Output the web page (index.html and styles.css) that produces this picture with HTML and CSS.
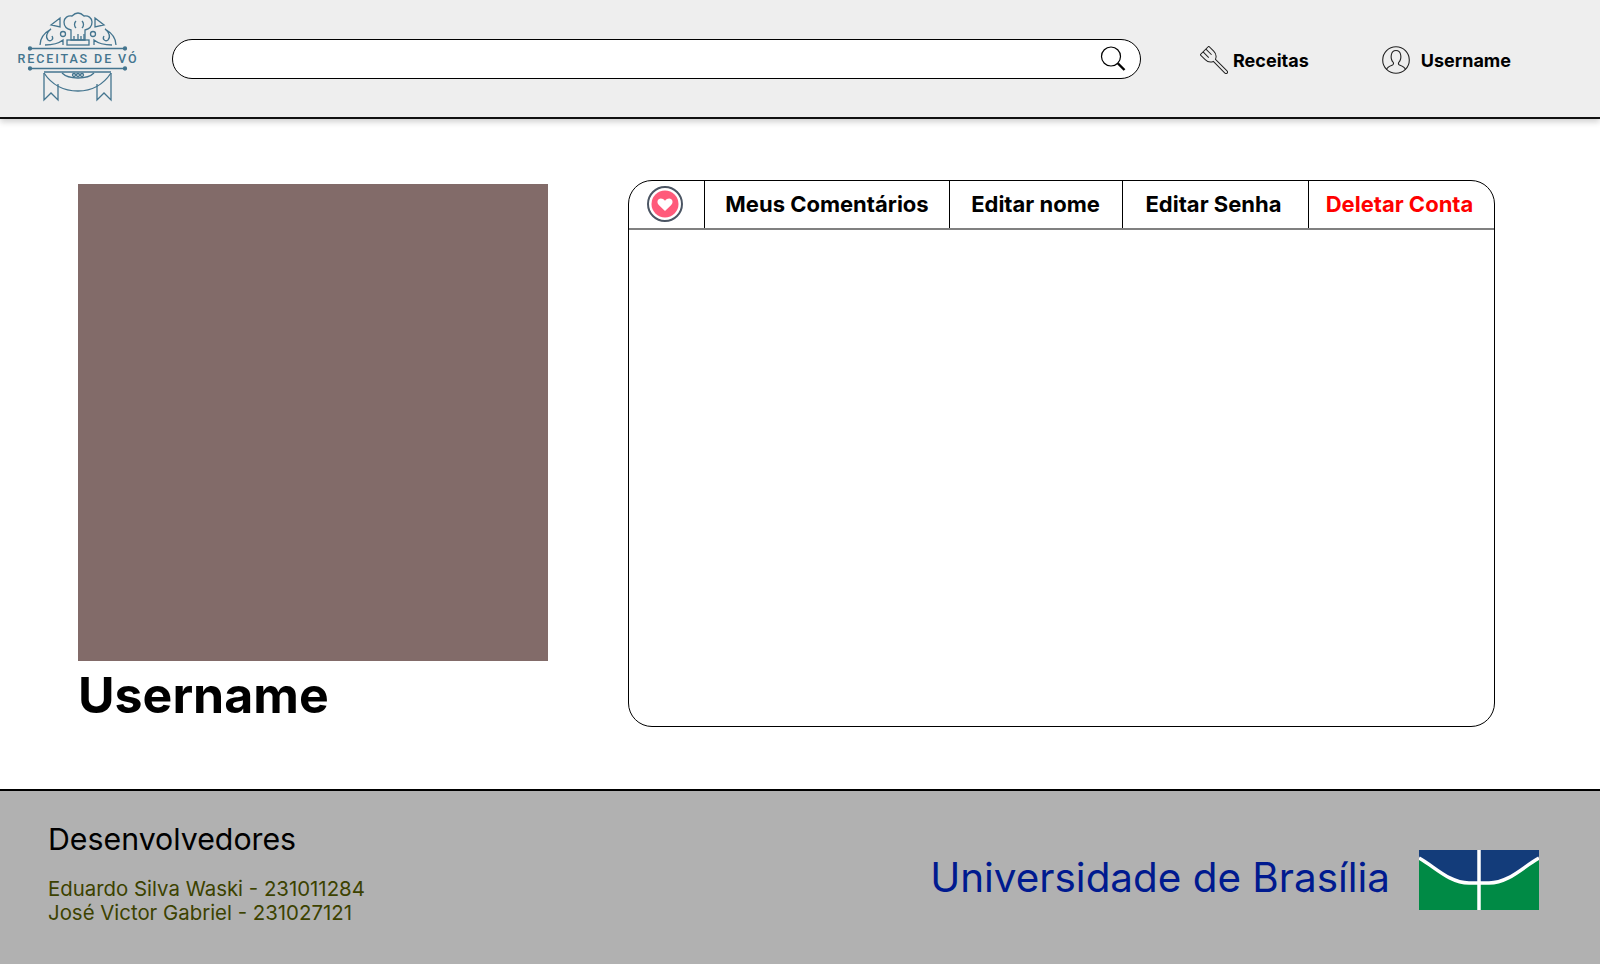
FILE: index.html
```html
<!DOCTYPE html>
<html lang="pt-BR">
<head>
  <meta charset="UTF-8" />
  <meta name="viewport" content="width=device-width, initial-scale=1.0"/>
  <title>Receitas de Vó</title>
  <link rel="stylesheet" href="styles.css">
</head>
<body>
  <header class="topbar">
    <svg class="logo" viewBox="0 13 120 90" fill="none" stroke="#44758f" stroke-width="1.300">
      <!-- chef hat -->
      <path d="M53 30c-4-1-7-4-7-8 0-4 4-7 8-6 2-2 4-3 6-3s4 1 6 3c4-1 8 2 8 6 0 4-3 7-7 8v10H53z"/>
      <path d="M58 21c-2 2-2 5 0 7M64 21c2 2 2 5 0 7"/>
      <path d="M56 40v-4M60 40v-6M63 40v-4M66 40v-6"/>
      <rect x="49" y="40" width="22" height="5"/>
      <!-- side ornaments -->
      <path d="M33 25l9-7v9zM77 18l9 7-9 2z"/>
      <path d="M22 45c0-7 4-12 11-16-4 3-6 8-3 11 3 2 6-1 4-4M98 45c0-7-4-12-11-16 4 3 6 8 3 11-3 2-6-1-4-4"/>
      <path d="M27 45c7 0 13-1 18-5v5M94 45c-7 0-13-1-18-5v5"/>
      <circle cx="45" cy="34" r="2.500"/>
      <circle cx="75" cy="34" r="2.500"/>
      <!-- rules -->
      <path d="M12 48.500h95M12 68.500h95"/>
      <circle cx="12" cy="48.500" r="1.500" fill="#44758f"/>
      <circle cx="107" cy="48.500" r="1.500" fill="#44758f"/>
      <circle cx="12" cy="68.500" r="1.500" fill="#44758f"/>
      <circle cx="107" cy="68.500" r="1.500" fill="#44758f"/>
      <text class="logo-text" x="60" y="63" text-anchor="middle">RECEITAS DE VÓ</text>
      <!-- ribbon -->
      <path d="M26 73v27l7-7 7 7V84M93 73v27l-7-7-7 7V84"/>
      <path d="M26 72h67"/>
      <path d="M26 73c8 12 20 18 34 18s25-6 33-18"/>
      <path d="M44 73c4 4 10 5 16 5s12-1 16-5"/>
      <circle cx="56" cy="75" r="1.500"/>
      <circle cx="60" cy="75" r="1.500"/>
      <circle cx="64" cy="75" r="1.500"/>
    </svg>

    <div class="search">
      <svg class="search-icon" viewBox="0 0 26 26" fill="none" stroke="#000">
        <circle cx="11" cy="10.500" r="9.500" stroke-width="1.200"/>
        <path d="M18 17.500l6.500 6.500" stroke-width="2.400"/>
      </svg>
    </div>

    <a class="nav-link nav-recipes">
      <svg class="nav-icon" viewBox="0 0 28 28" fill="none" stroke="#222" stroke-width="1">
        <g transform="translate(4.500 4.500) rotate(-45)">
          <path d="M-6 0V7c0 3.500 2 6 4.500 7V30c0 1 .7 2 1.500 2s1.500-1 1.500-2V14c2.500-1 4.500-3.500 4.500-7V0z"/>
          <path d="M-2 0V8M2 0V8"/>
        </g>
      </svg>
      Receitas
    </a>
    <a class="nav-link nav-user">
      <svg class="nav-icon" viewBox="0 0 28 28" fill="none" stroke="#222" stroke-width="1.100">
        <circle cx="14" cy="14" r="13.300"/>
        <path d="M4.500 23.500c1-3 3-3.500 6-4.500 1-.4 1.200-1.500.8-2.500-1.800-2-2.500-5-2-7.500.5-3 2.500-4.500 4.700-4.500s4.200 1.500 4.700 4.500c.5 2.500-.2 5.500-2 7.500-.4 1-.2 2.100.8 2.500 3 1 5 1.500 6 4.500"/>
      </svg>
      Username
    </a>
  </header>

  <main class="content">
    <section class="profile">
      <div class="photo"></div>
      <h1 class="profile-name">Username</h1>
    </section>

    <section class="panel">
      <nav class="tabs">
        <button class="tab tab-fav">
          <svg class="fav-icon" viewBox="0 0 36 36">
            <circle cx="18" cy="18" r="17" fill="#fff" stroke="#4b5563" stroke-width="2"/>
            <circle cx="18" cy="18" r="13.500" fill="#ff5a7a"/>
            <path d="M18 25l-6.200-6c-1.800-1.800-1.800-4.300-.2-5.700 1.700-1.400 4.500-1 6.400 1.400 1.900-2.400 4.700-2.800 6.400-1.400 1.600 1.400 1.600 3.900-.2 5.700z" fill="#fff"/>
          </svg>
        </button>
        <button class="tab tab-comments">Meus Comentários</button>
        <button class="tab tab-name">Editar nome</button>
        <button class="tab tab-pass">Editar Senha</button>
        <button class="tab tab-delete">Deletar Conta</button>
      </nav>
    </section>
  </main>

  <footer class="footer">
    <div class="devs">
      <h2>Desenvolvedores</h2>
      <p>Eduardo Silva Waski - 231011284</p>
      <p>José Victor Gabriel - 231027121</p>
    </div>
    <div class="unb">
      <span class="unb-name">Universidade de Brasília</span>
      <svg class="unb-flag" viewBox="0 0 120 60">
        <rect width="120" height="60" fill="#008a45"/>
        <path d="M0 0h120v8c-15 8-30 25-50 25H50C30 33 15 16 0 8z" fill="#133c7a"/>
        <path d="M0 8c15 8 30 25 50 25h20c20 0 35-17 50-25" fill="none" stroke="#fff" stroke-width="3.500"/>
        <path d="M60 0v60" stroke="#fff" stroke-width="3.500"/>
      </svg>
    </div>
  </footer>
</body>
</html>
```

FILE: styles.css
```css
* {
  box-sizing: border-box;
  margin: 0;
}
body {
  display: flex;
  flex-direction: column;
  height: 100vh;
  font-family: Inter, "Liberation Sans", sans-serif;
  background-color: #fff;
  color: #000;
  overflow: hidden;
}
.topbar {
  display: flex;
  align-items: center;
  height: 119px;
  padding-left: 18px;
  background-color: #eee;
  border-bottom: 2px solid #111;
  box-shadow: 0 3px 6px rgba(0, 0, 0, 0.18);
}
.logo {
  width: 120px;
  height: 90px;
  overflow: visible;
  margin-top: -2px;
}
.logo-text {
  font-family: Roboto, sans-serif;
  font-size: 12.500px;
  font-weight: 500;
  letter-spacing: 1.900px;
  fill: #44758f;
  stroke: none;
}
.search {
  display: flex;
  align-items: center;
  justify-content: flex-end;
  width: 969px;
  height: 40px;
  margin-top: 1px;
  margin-left: 34px;
  padding-right: 14px;
  background-color: #fff;
  border: 1px solid #000;
  border-radius: 20px;
}
.search-icon {
  width: 26px;
  height: 26px;
}
.nav-link {
  display: flex;
  align-items: center;
  font-size: 18px;
  font-weight: 700;
  margin-top: 3px;
}
.nav-recipes {
  gap: 5px;
  margin-left: 59px;
}
.nav-user {
  gap: 11px;
  margin-left: 73px;
}
.nav-icon {
  width: 28px;
  height: 28px;
}
.content {
  flex: 1;
  display: flex;
  padding: 61px 105px 0 78px;
}
.profile {
  width: 470px;
  margin-right: 80px;
  padding-top: 4px;
}
.photo {
  height: 477px;
  background-color: #826b69;
}
.profile-name {
  font-size: 50px;
  font-weight: 700;
  line-height: 68px;
}
.panel {
  flex: 1;
  height: 547px;
  background-color: #fff;
  border: 1px solid #000;
  border-radius: 24px;
  overflow: hidden;
}
.tabs {
  display: flex;
  height: 49px;
  border-bottom: 2px solid #808080;
}
.tab {
  padding: 0 0 2px;
  background: none;
  border: none;
  border-right: 1px solid #000;
  font-family: inherit;
  font-size: 22px;
  font-weight: 700;
  color: #000;
}
.tab-fav {
  width: 76px;
  display: flex;
  align-items: center;
  justify-content: center;
  padding: 0 4px 2px 0;
}
.fav-icon {
  width: 36px;
  height: 36px;
}
.tab-comments {
  width: 245px;
}
.tab-name {
  width: 173px;
  padding-right: 1px;
}
.tab-pass {
  width: 186px;
  padding-right: 4px;
}
.tab-delete {
  flex: 1;
  padding-right: 4px;
  border-right: none;
  color: #f00;
}
.footer {
  display: flex;
  justify-content: space-between;
  align-items: flex-start;
  height: 175px;
  padding: 30px 61px 0 48px;
  background-color: #b1b1b1;
  border-top: 2px solid #000;
}
.devs h2 {
  font-size: 30.300px;
  font-weight: 400;
  line-height: 36px;
  margin-bottom: 20px;
}
.devs p {
  font-size: 20.400px;
  line-height: 23.500px;
  color: #3c4200;
}
.unb {
  display: flex;
  align-items: center;
  gap: 29px;
  margin-top: 29px;
}
.unb-name {
  font-size: 40.400px;
  line-height: 48px;
  margin-top: -5px;
  color: #001a8f;
}
.unb-flag {
  width: 120px;
  height: 60px;
}
```
